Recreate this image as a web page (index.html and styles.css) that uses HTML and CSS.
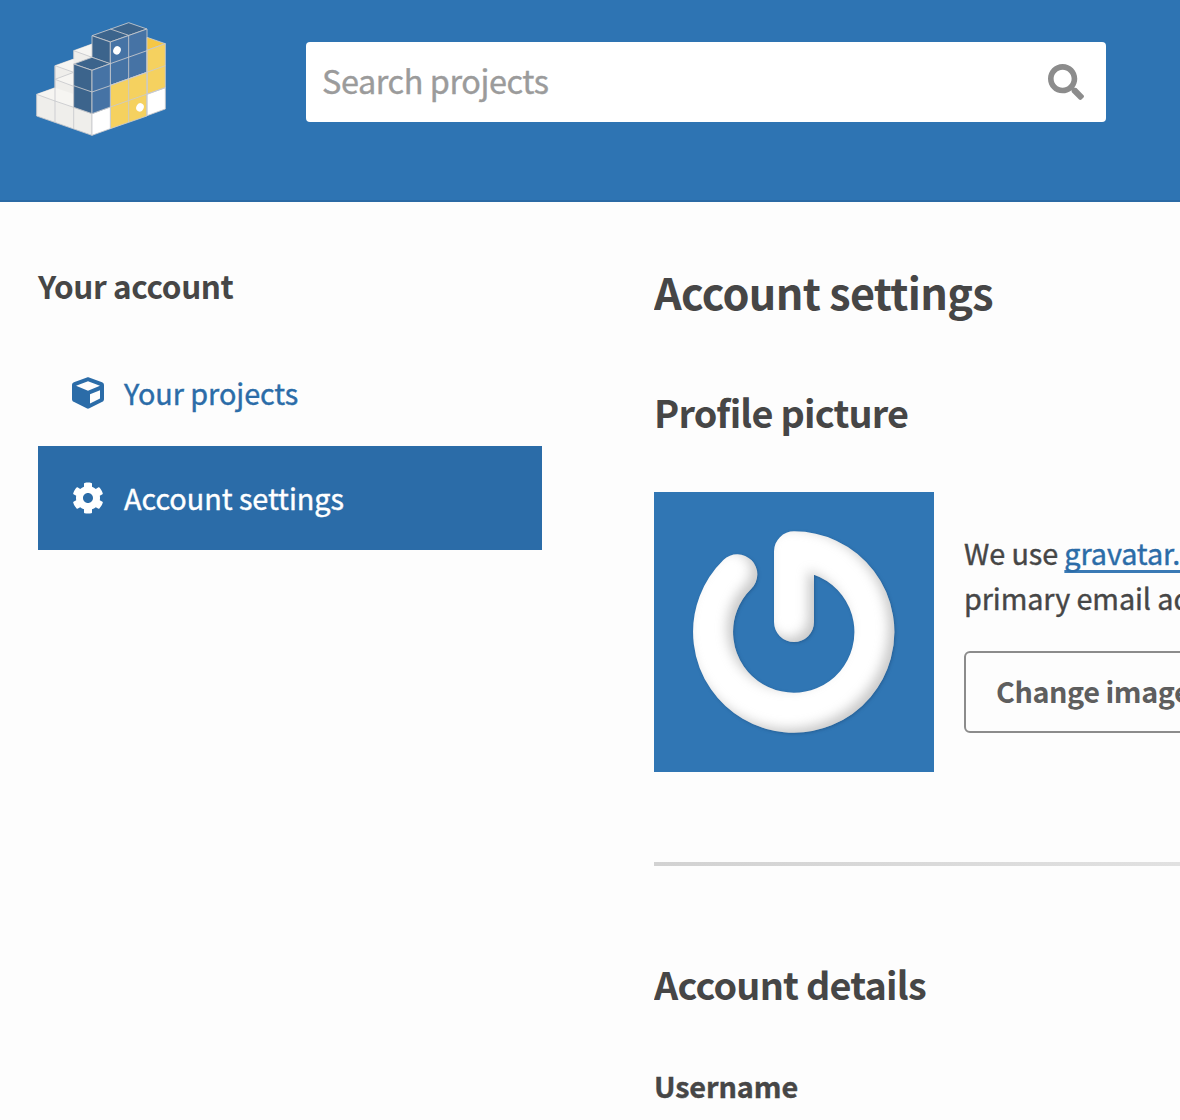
FILE: index.html
```html
<!DOCTYPE html>
<html lang="en">
<head>
<meta charset="utf-8">
<title>Account settings</title>
<link rel="stylesheet" href="styles.css">
</head>
<body>
<header class="site-header">
  <a class="logo" href="#" aria-label="Home">
    <svg width="130" height="114" viewBox="48 36 390 342" stroke="#c8cacd" stroke-width="2.6" stroke-linejoin="round">
      <path fill="#efeeeb" d="M50 253L105 233V210V167L161 147V122L216 102V376L50 318Z"/>
      <path fill="#f6f5f2" stroke="none" d="M50 253L105 233L161 252V292L105 273ZM105 167L161 147V187ZM105 208L161 188V229ZM161 122L216 102V140L176 127Z"/>
      <path fill="none" d="M50 253L105 273L161 292L216 311M105 273V337M161 292V357M105 167V273M105 167L161 187L105 208L161 229M161 187V292M161 122L216 142"/>
      <path fill="#3c648c" d="M216 77L326 38L381 57L271 96Z"/>
      <path fill="#3c648c" d="M216 77L271 96V162L216 142Z"/>
      <path fill="#4673a5" d="M271 96L381 57V187L271 226Z"/>
      <path fill="#f5c745" d="M381 82L436 101L381 121Z"/>
      <path fill="#f5d15f" d="M381 121L436 101V233L381 253Z"/>
      <path fill="#f5d15f" d="M271 226L381 187V318L271 356Z"/>
      <path fill="#fff" d="M381 253L436 233V297L381 317ZM216 311L271 291V356L216 376Z"/>
      <path fill="#3c648c" d="M161 162L216 142L271 161L216 181Z"/>
      <path fill="#3c648c" d="M161 162L216 181V311L161 292Z"/>
      <path fill="#4673a5" d="M216 181L271 161V291L216 311Z"/>
      <path fill="none" d="M271 57L326 76M326 76V336M271 161L381 122M161 227L216 246L271 227M271 291L436 233M271 226L436 167M381 121V318"/>
      <g fill="#fff" stroke="none">
        <ellipse cx="291" cy="121" rx="11" ry="13" transform="rotate(25 291 121)"/>
        <ellipse cx="360" cy="292" rx="11" ry="13" transform="rotate(25 360 292)"/>
      </g>
    </svg>
  </a>
  <form class="search">
    <input class="search-input" type="text" placeholder="Search projects" aria-label="Search projects">
    <svg class="search-icon" viewBox="0 0 512 512"><path d="M505 442.7L405.3 343c-4.5-4.5-10.6-7-17-7H372c27.6-35.3 44-79.7 44-128C416 93.1 322.9 0 208 0S0 93.1 0 208s93.1 208 208 208c48.3 0 92.7-16.4 128-44v16.3c0 6.4 2.5 12.5 7 17l99.7 99.7c9.4 9.4 24.6 9.4 33.9 0l28.3-28.3c9.4-9.4 9.4-24.6.1-34zM208 336c-70.7 0-128-57.2-128-128 0-70.7 57.2-128 128-128 70.7 0 128 57.2 128 128 0 70.7-57.2 128-128 128z"/></svg>
  </form>
</header>
<div class="page">
  <aside class="sidebar">
    <h2 class="sidebar-title">Your account</h2>
    <nav class="menu">
      <a class="menu-item" href="#">
        <svg class="menu-icon" viewBox="0 0 512 512"><path d="M239.1 6.3l-208 78c-18.7 7-31.1 25-31.1 45v225.1c0 18.2 10.3 34.8 26.5 42.9l208 104c13.5 6.8 29.4 6.8 42.9 0l208-104c16.3-8.1 26.5-24.8 26.5-42.9V129.3c0-20-12.4-37.9-31.1-44.9l-208-78C262 2.2 250 2.2 239.1 6.3zM256 68.4l192 72v1.1l-192 78-192-78v-1.1l192-72zm32 356V275.5l160-65v133.9l-160 80z"/></svg>
        <span class="menu-label">Your projects</span>
      </a>
      <a class="menu-item menu-item-active" href="#">
        <svg class="menu-icon" viewBox="0 0 512 512"><path d="M487.4 315.7l-42.6-24.6c4.3-23.2 4.3-47 0-70.2l42.6-24.6c4.9-2.8 7.1-8.6 5.5-14-11.1-35.6-30-67.8-54.7-94.6-3.8-4.1-10-5.1-14.8-2.3L380.8 110c-17.9-15.4-38.5-27.3-60.8-35.1V25.8c0-5.6-3.9-10.5-9.4-11.7-36.7-8.2-74.3-7.8-109.2 0-5.5 1.2-9.4 6.1-9.4 11.7V75c-22.2 7.9-42.8 19.8-60.8 35.1L88.7 85.5c-4.9-2.8-11-1.9-14.8 2.3-24.7 26.7-43.6 58.9-54.7 94.6-1.7 5.4.6 11.2 5.5 14L67.3 221c-4.3 23.2-4.3 47 0 70.2l-42.6 24.6c-4.9 2.8-7.1 8.6-5.5 14 11.1 35.6 30 67.8 54.7 94.6 3.8 4.1 10 5.1 14.8 2.3l42.6-24.6c17.9 15.4 38.5 27.3 60.8 35.1v49.2c0 5.6 3.9 10.5 9.4 11.7 36.7 8.2 74.3 7.8 109.2 0 5.5-1.2 9.4-6.1 9.4-11.7v-49.2c22.2-7.9 42.8-19.8 60.8-35.1l42.6 24.6c4.9 2.8 11 1.9 14.8-2.3 24.7-26.7 43.6-58.9 54.7-94.6 1.5-5.5-.7-11.3-5.6-14.1zM256 336c-44.1 0-80-35.9-80-80s35.9-80 80-80 80 35.9 80 80-35.9 80-80 80z"/></svg>
        <span class="menu-label">Account settings</span>
      </a>
    </nav>
  </aside>
  <main class="content">
    <h1 class="title">Account settings</h1>
    <h2 class="section-title">Profile picture</h2>
    <div class="profile">
      <svg class="avatar" viewBox="12 12 840 840">
        <defs>
          <filter id="emboss" filterUnits="userSpaceOnUse" x="12" y="12" width="840" height="840" color-interpolation-filters="sRGB">
            <feGaussianBlur in="SourceAlpha" stdDeviation="18" result="soft"/>
            <feOffset in="soft" dx="-17" dy="-12" result="lit"/>
            <feComposite in="SourceAlpha" in2="lit" operator="out" result="edge"/>
            <feFlood flood-color="#777" flood-opacity=".4"/>
            <feComposite in2="edge" operator="in" result="shade"/>
            <feGaussianBlur in="SourceAlpha" stdDeviation="4"/>
            <feOffset dx="2" dy="3" result="drop"/>
            <feFlood flood-color="#1c4a78" flood-opacity=".5"/>
            <feComposite in2="drop" operator="in" result="dropshade"/>
            <feMerge><feMergeNode in="dropshade"/><feMergeNode in="SourceGraphic"/><feMergeNode in="shade"/></feMerge>
          </filter>
        </defs>
        <rect x="12" y="12" width="840" height="840" fill="#3076b4"/>
        <path d="M262 259A242 242 0 1 0 432 190V402" fill="none" stroke="#fff" stroke-width="120" stroke-linecap="round" stroke-linejoin="round" filter="url(#emboss)"/>
      </svg>
      <div class="profile-info">
        <p class="profile-text">We use <a class="link" href="#">gravatar.com</a><br>primary email address</p>
        <a class="button" href="#">Change image</a>
      </div>
    </div>
    <hr class="divider">
    <h2 class="section-title details-title">Account details</h2>
    <h3 class="field-title">Username</h3>
  </main>
</div>
</body>
</html>
```
FILE: styles.css
```css
* { box-sizing: border-box; }
html { overflow: hidden; }
body {
  margin: 0;
  height: 1120px;
  overflow: hidden;
  background: #fdfdfd;
  color: #464646;
  font-family: "Noto Sans CJK SC", "Noto Sans", sans-serif;
  font-size: 28.8px;
  line-height: 45px;
}
h1, h2, h3, p { margin: 0; }
a { text-decoration: none; }
svg { display: block; flex: none; }
.site-header {
  display: flex;
  align-items: flex-start;
  height: 202px;
  padding: 22px 0 0 36px;
  background: #2e74b3;
  border-bottom: 2px solid #2a6aa5;
}
.search {
  display: flex;
  align-items: center;
  width: 800px;
  height: 80px;
  margin: 20px 0 0 140px;
  padding: 0 22px 0 16px;
  background: #fff;
  border-radius: 4px;
}
.search-input {
  flex: 1;
  height: 80px;
  padding: 0 0 5px;
  border: 0;
  outline: 0;
  background: none;
  font: 32.4px/48px "Noto Sans CJK SC", "Noto Sans", sans-serif;
  letter-spacing: -.4px;
  -webkit-text-stroke: .4px;
}
.search-input::placeholder { color: #9b9b9b; opacity: 1; }
.search-icon { width: 36px; height: 36px; margin-bottom: 1px; fill: #8c8c8c; }
.page {
  display: grid;
  grid-template-columns: 504px minmax(0, 1fr);
  column-gap: 112px;
  padding-left: 38px;
}
.content { overflow: hidden; }
.sidebar-title {
  margin-top: 61px;
  font-size: 31.5px;
  line-height: 45px;
  letter-spacing: -.4px;
}
.menu { margin-top: 34px; }
.menu-item {
  display: flex;
  align-items: center;
  gap: 20px;
  height: 104px;
  padding: 0 0 2px 34px;
  color: #2b6ca8;
}
.menu-item-active {
  padding-bottom: 0;
  background: #2b6ca8;
  color: #fff;
}
.menu-icon { width: 32px; height: 32px; fill: currentColor; }
.menu-label {
  padding-bottom: 2px;
  letter-spacing: -.05px;
  -webkit-text-stroke: .4px;
}
.title {
  margin-top: 59px;
  font-size: 43.2px;
  line-height: 60px;
  letter-spacing: -.7px;
}
.section-title {
  margin-top: 65px;
  font-size: 37.8px;
  line-height: 52px;
  letter-spacing: -.78px;
}
.profile {
  display: flex;
  align-items: center;
  gap: 30px;
  margin-top: 54px;
  white-space: nowrap;
}
.avatar { width: 280px; height: 280px; }
.profile-info { padding-bottom: 1px; }
.profile-text {
  letter-spacing: -.1px;
  -webkit-text-stroke: .4px;
}
.link {
  color: #2b6ca8;
  text-decoration: underline 3px #3a7ab5;
  text-underline-offset: 5px;
  text-decoration-skip-ink: none;
}
.button {
  display: inline-block;
  height: 82px;
  margin-top: 31px;
  padding: 0 30px;
  border: 2px solid #8c8c8c;
  border-radius: 6px;
  color: #5e5e5e;
  font-weight: 700;
  letter-spacing: -.45px;
  line-height: 76px;
}
.divider {
  height: 4px;
  margin: 90px 0 0;
  border: 0;
  background: linear-gradient(90deg, #d2d2d2, #e1e1e1);
}
.details-title { margin-top: 92px; }
.field-title {
  margin-top: 53px;
  font-size: 28.8px;
  line-height: 45px;
  letter-spacing: -.1px;
  -webkit-text-stroke: .4px;
}
```
